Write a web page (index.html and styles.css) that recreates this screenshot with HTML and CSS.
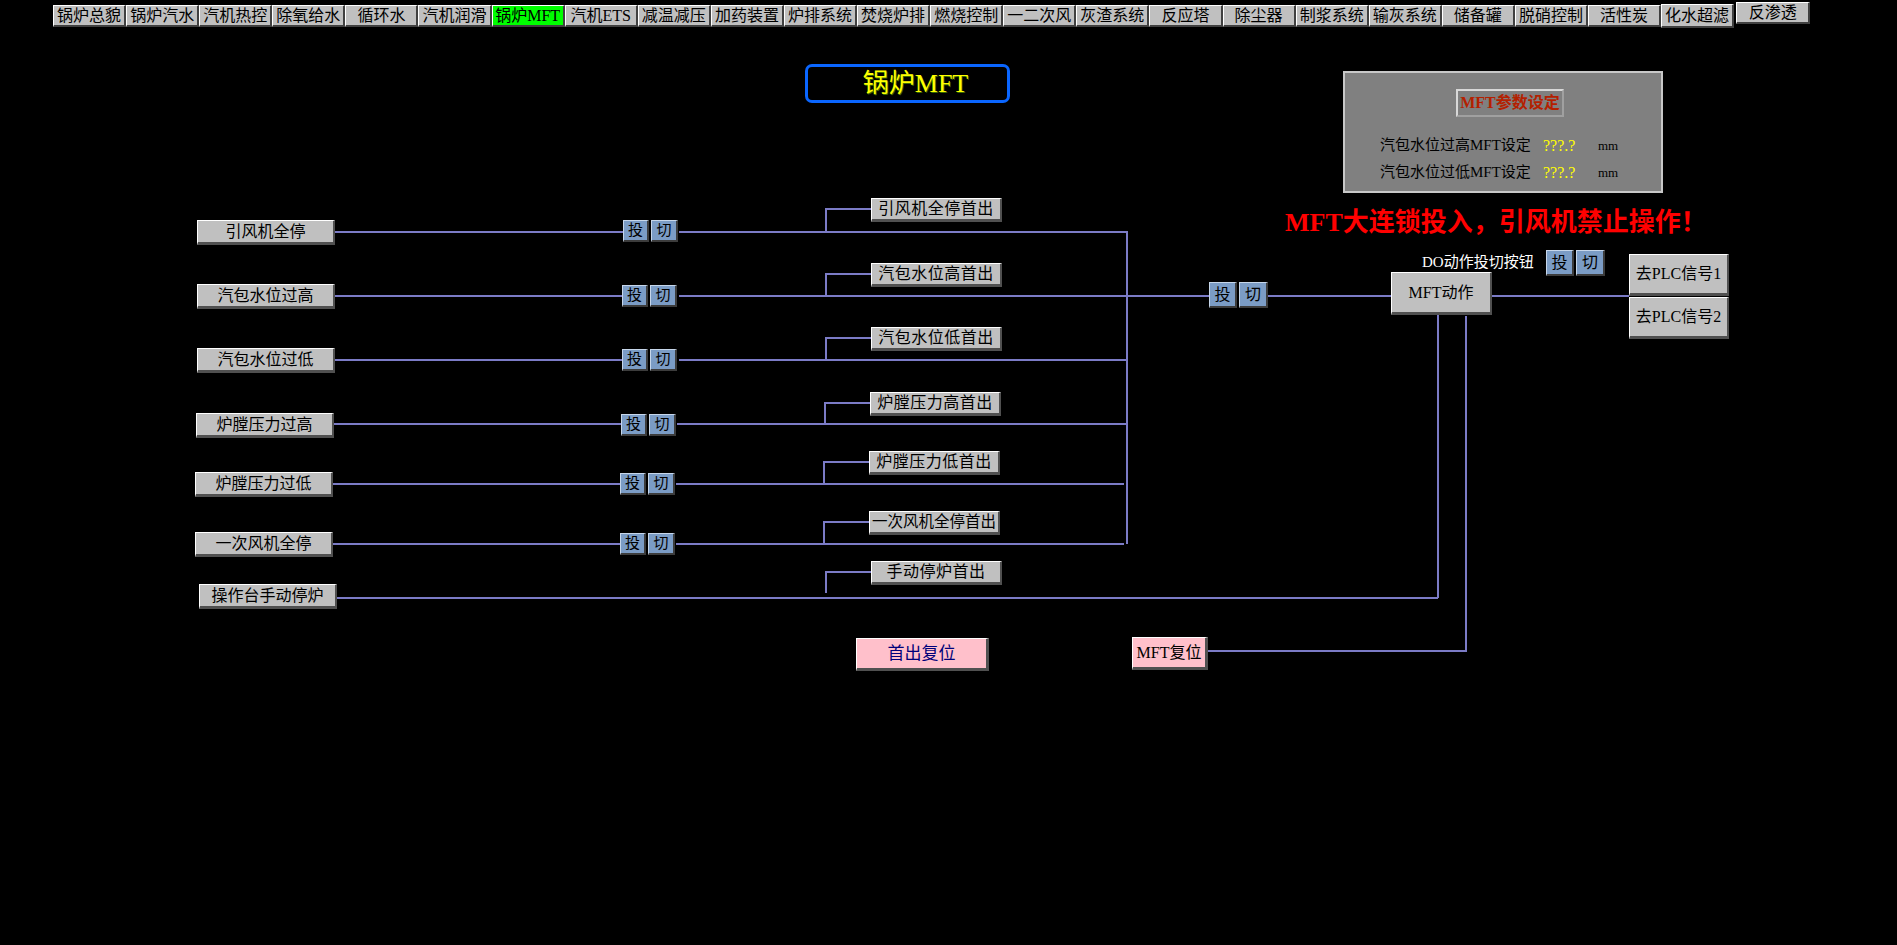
FILE: index.html
```html
<!DOCTYPE html>
<html lang="zh-CN">
<head>
<meta charset="utf-8">
<title>锅炉MFT</title>
<link rel="stylesheet" href="styles.css">
</head>
<body>
<nav class="nav">
  <div class="nav-btn">锅炉总貌</div>
  <div class="nav-btn">锅炉汽水</div>
  <div class="nav-btn">汽机热控</div>
  <div class="nav-btn">除氧给水</div>
  <div class="nav-btn">循环水</div>
  <div class="nav-btn">汽机润滑</div>
  <div class="nav-btn active">锅炉MFT</div>
  <div class="nav-btn">汽机ETS</div>
  <div class="nav-btn">减温减压</div>
  <div class="nav-btn">加药装置</div>
  <div class="nav-btn">炉排系统</div>
  <div class="nav-btn">焚烧炉排</div>
  <div class="nav-btn">燃烧控制</div>
  <div class="nav-btn">一二次风</div>
  <div class="nav-btn">灰渣系统</div>
  <div class="nav-btn">反应塔</div>
  <div class="nav-btn">除尘器</div>
  <div class="nav-btn">制浆系统</div>
  <div class="nav-btn">输灰系统</div>
  <div class="nav-btn">储备罐</div>
  <div class="nav-btn">脱硝控制</div>
  <div class="nav-btn">活性炭</div>
  <div class="nav-btn raised">化水超滤</div>
  <div class="nav-btn raised last">反渗透</div>
</nav>

<main class="canvas">
  <svg class="wires" width="1897" height="915" viewBox="0 30 1897 915">
    <g fill="none" stroke="#7b7bc6" stroke-width="2">
      <path d="M335 232 H623 M679 232 H1127"/>
      <path d="M871 209 H826 V232"/>
      <path d="M335 296 H622 M679 296 H1209 M1268 296 H1391 M1492 296 H1629"/>
      <path d="M871 274 H826 V296"/>
      <path d="M335 360 H622 M679 360 H1127"/>
      <path d="M871 338 H826 V360"/>
      <path d="M334 424 H621 M677 424 H1127"/>
      <path d="M870 403 H825 V424"/>
      <path d="M333 484 H620 M676 484 H1124"/>
      <path d="M869 462 H824 V484"/>
      <path d="M333 544 H620 M676 544 H1124"/>
      <path d="M869 522 H824 V544"/>
      <path d="M337 598 H1438"/>
      <path d="M871 572 H826 V593"/>
      <path d="M1127 231 V544"/>
      <path d="M1438 315 V598"/>
      <path d="M1466 316 V651 H1208"/>
    </g>
  </svg>

  <div class="title" style="left:805px;top:34px">锅炉MFT</div>

  <section class="param" style="left:1343px;top:41px">
    <div class="param-btn">MFT参数设定</div>
    <div class="param-rows">
      <div class="param-row"><span class="p-label">汽包水位过高MFT设定</span><span class="p-val">???.?</span><span class="p-unit">mm</span></div>
      <div class="param-row"><span class="p-label">汽包水位过低MFT设定</span><span class="p-val">???.?</span><span class="p-unit">mm</span></div>
    </div>
  </section>

  <div class="warn" style="left:1285px;top:178px">MFT大连锁投入，引风机禁止操作！</div>

  <div class="gbox in" style="left:197px;top:190px">引风机全停</div>
  <div class="gbox in" style="left:197px;top:254px">汽包水位过高</div>
  <div class="gbox in" style="left:197px;top:318px">汽包水位过低</div>
  <div class="gbox in" style="left:196px;top:383px">炉膛压力过高</div>
  <div class="gbox in" style="left:195px;top:442px">炉膛压力过低</div>
  <div class="gbox in" style="left:195px;top:502px">一次风机全停</div>
  <div class="gbox in" style="left:199px;top:554px">操作台手动停炉</div>

  <div class="tq-pair" style="left:623px;top:190px"><div class="tq">投</div><div class="tq">切</div></div>
  <div class="tq-pair" style="left:622px;top:255px"><div class="tq">投</div><div class="tq">切</div></div>
  <div class="tq-pair" style="left:622px;top:319px"><div class="tq">投</div><div class="tq">切</div></div>
  <div class="tq-pair" style="left:621px;top:384px"><div class="tq">投</div><div class="tq">切</div></div>
  <div class="tq-pair" style="left:620px;top:443px"><div class="tq">投</div><div class="tq">切</div></div>
  <div class="tq-pair" style="left:620px;top:503px"><div class="tq">投</div><div class="tq">切</div></div>

  <div class="gbox first" style="left:871px;top:168px">引风机全停首出</div>
  <div class="gbox first" style="left:871px;top:233px">汽包水位高首出</div>
  <div class="gbox first" style="left:871px;top:297px">汽包水位低首出</div>
  <div class="gbox first" style="left:870px;top:362px">炉膛压力高首出</div>
  <div class="gbox first" style="left:869px;top:421px">炉膛压力低首出</div>
  <div class="gbox first tight" style="left:869px;top:481px">一次风机全停首出</div>
  <div class="gbox first" style="left:871px;top:531px">手动停炉首出</div>

  <div class="tq-pair big" style="left:1209px;top:252px"><div class="tq">投</div><div class="tq">切</div></div>
  <div class="gbox mft" style="left:1391px;top:242px">MFT动作</div>
  <div class="do-label" style="left:1422px;top:222px">DO动作投切按钮</div>
  <div class="tq-pair big" style="left:1546px;top:220px"><div class="tq">投</div><div class="tq">切</div></div>
  <div class="gbox plc" style="left:1629px;top:224px">去PLC信号1</div>
  <div class="gbox plc" style="left:1629px;top:267px">去PLC信号2</div>

  <div class="pbtn reset-first" style="left:856px;top:608px">首出复位</div>
  <div class="pbtn reset-mft" style="left:1132px;top:607px">MFT复位</div>
</main>
</body>
</html>
```

FILE: styles.css
```css
html, body {
  margin: 0;
  padding: 0;
  background: #000;
}

body {
  width: 1897px;
  height: 945px;
  overflow: hidden;
  font-family: "Liberation Serif", "Noto Sans CJK SC", serif;
  color: #000;
}

.nav {
  display: flex;
  align-items: flex-start;
  box-sizing: border-box;
  height: 30px;
  padding: 5px 0 0 53px;
}

.nav-btn {
  box-sizing: border-box;
  width: 73.1px;
  height: 22px;
  display: flex;
  align-items: center;
  justify-content: center;
  background: #c0c0c0;
  border-style: solid;
  border-width: 1px 2px 2px 1px;
  border-color: #ffffff #404040 #404040 #ffffff;
  font-size: 16px;
  line-height: 1;
  white-space: nowrap;
  overflow: hidden;
}

.nav-btn.active {
  background: #00ff00;
}

.nav-btn.raised {
  margin-top: -1px;
  height: 24px;
}

.nav-btn.last {
  margin-top: -3px;
  margin-left: 2px;
  width: 74px;
  height: 22px;
}

.canvas {
  position: relative;
  width: 1897px;
  height: 915px;
}

.wires {
  position: absolute;
  left: 0;
  top: 0;
  display: block;
}

.title {
  position: absolute;
  box-sizing: border-box;
  width: 205px;
  height: 39px;
  border: 3px solid #0a66ff;
  border-radius: 7px;
  display: flex;
  align-items: center;
  justify-content: center;
  padding-left: 16px;
  color: #ffff00;
  font-size: 26px;
  line-height: 1;
  text-shadow: 1px 1px 0 #3a6a00;
}

.param {
  position: absolute;
  box-sizing: border-box;
  width: 320px;
  height: 122px;
  background: #808080;
  border: 2px solid #c8c8c8;
  padding: 16px 0 0 35px;
}

.param-btn {
  box-sizing: border-box;
  width: 108px;
  height: 28px;
  margin-left: 76px;
  border: 2px solid #d8d8d8;
  border-right-color: #a0a0a0;
  border-bottom-color: #a0a0a0;
  display: flex;
  align-items: center;
  justify-content: center;
  color: #b42000;
  font-size: 16px;
  font-weight: bold;
  line-height: 1;
}

.param-rows {
  margin-top: 15px;
}

.param-row {
  display: flex;
  align-items: center;
  height: 27px;
  font-size: 15px;
  line-height: 1;
}

.p-label {
  width: 163px;
  white-space: nowrap;
}

.p-val {
  width: 55px;
  color: #ffff00;
  font-size: 16px;
}

.p-unit {
  font-size: 13px;
}

.warn {
  position: absolute;
  color: #ff0000;
  font-size: 26px;
  font-weight: bold;
  line-height: 30px;
  white-space: nowrap;
}

.gbox {
  position: absolute;
  box-sizing: border-box;
  display: flex;
  align-items: center;
  justify-content: center;
  background: #c0c0c0;
  border-style: solid;
  border-width: 1px 2px 3px 1px;
  border-color: #ffffff #505050 #505050 #ffffff;
  font-size: 16px;
  line-height: 1;
  white-space: nowrap;
}

.gbox.in {
  width: 138px;
  height: 25px;
}

.gbox.first {
  width: 131px;
  height: 24px;
  letter-spacing: 0.5px;
}

.gbox.first.tight {
  letter-spacing: 0;
  font-size: 15.5px;
}

.gbox.mft {
  width: 101px;
  height: 43px;
}

.gbox.plc {
  width: 100px;
  height: 42px;
}

.tq-pair {
  position: absolute;
  display: flex;
  gap: 2px;
}

.tq {
  box-sizing: border-box;
  width: 26px;
  height: 22px;
  display: flex;
  align-items: center;
  justify-content: center;
  background: #7b9cc5;
  border-style: solid;
  border-width: 1px 2px 2px 1px;
  border-color: #c6d6ea #3c3c3c #3c3c3c #c6d6ea;
  font-size: 15px;
  line-height: 1;
}

.tq + .tq {
  width: 27px;
}

.tq-pair.big .tq {
  width: 28px;
  height: 26px;
  font-size: 16px;
}

.tq-pair.big .tq + .tq {
  width: 29px;
}

.do-label {
  position: absolute;
  color: #ffffff;
  font-size: 15px;
  line-height: 20px;
  white-space: nowrap;
}

.pbtn {
  position: absolute;
  box-sizing: border-box;
  display: flex;
  align-items: center;
  justify-content: center;
  background: #ffc0cb;
  border-style: solid;
  border-width: 1px 3px 3px 1px;
  border-color: #ffffff #505050 #505050 #ffffff;
  line-height: 1;
  white-space: nowrap;
}

.reset-first {
  width: 133px;
  height: 33px;
  color: #00007a;
  font-size: 17px;
}

.reset-mft {
  width: 76px;
  height: 33px;
  color: #000;
  font-size: 16px;
}
```
